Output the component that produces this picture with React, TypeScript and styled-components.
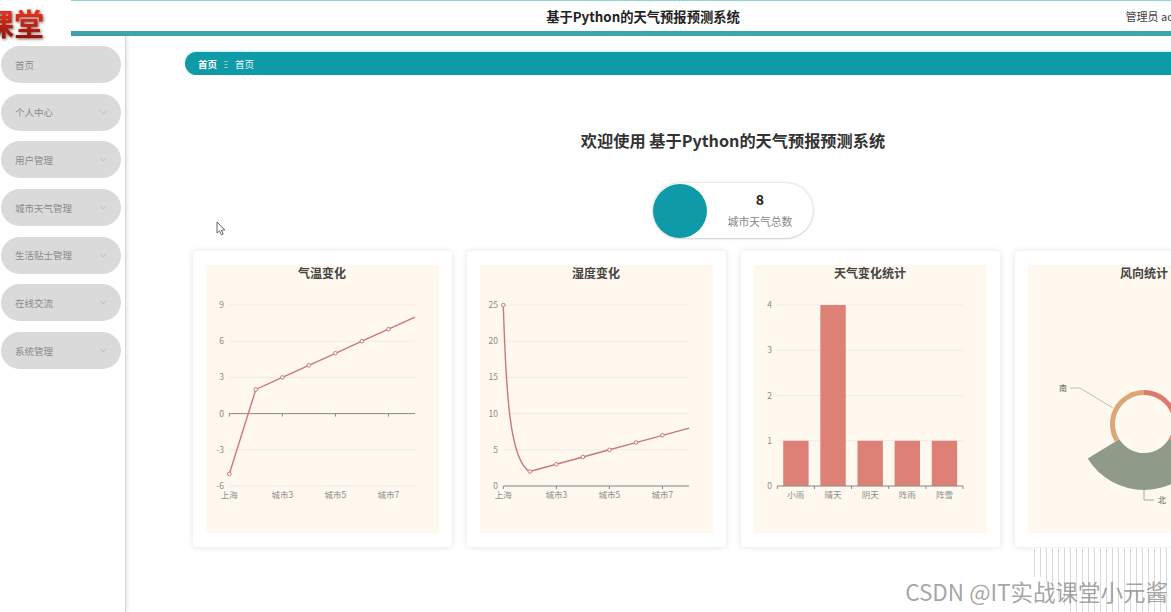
import React from 'react'
import styled, { createGlobalStyle } from 'styled-components'
import { ChevronDown } from 'lucide-react'

const FONT = '"Noto Sans CJK SC", "Liberation Sans", sans-serif'
const TEAL = '#0f9aa8'

const GlobalStyle = createGlobalStyle`
  html, body {
    margin: 0;
    height: 100%;
    overflow: hidden;
    background: #fff;
    font-family: ${FONT};
  }
`

const menus = [
  { label: '首页', arrow: false },
  { label: '个人中心', arrow: true },
  { label: '用户管理', arrow: true },
  { label: '城市天气管理', arrow: true },
  { label: '生活贴士管理', arrow: true },
  { label: '在线交流', arrow: true },
  { label: '系统管理', arrow: true },
]

const GRID_LEFT = 23.3
const GRID_RIGHT = 209
const GRID_TOP = 40
const GRID_BOTTOM = 221

type LineChartProps = {
  ticks: number[]
  values: number[]
  smoothHead?: boolean
}

const LineChart = ({ ticks, values, smoothHead }: LineChartProps) => {
  const min = ticks[0]
  const max = ticks[ticks.length - 1]
  const step = (GRID_RIGHT - GRID_LEFT) / (values.length - 1)
  const toX = (i: number) => GRID_LEFT + i * step
  const toY = (v: number) => GRID_BOTTOM - ((v - min) / (max - min)) * (GRID_BOTTOM - GRID_TOP)
  const zeroY = toY(0)

  const points = values.map((v, i) => `${toX(i)} ${toY(v)}`)
  const line = smoothHead
    ? `M${points[0]} C26 130 30 196 ${points[1]} L${points.slice(2).join(' L')}`
    : `M${points.join(' L')}`

  return (
    <ChartSvg viewBox="0 16 232 252">
      {ticks.map((t) => (
        <g key={t}>
          <line x1={GRID_LEFT} x2={GRID_RIGHT} y1={toY(t)} y2={toY(t)} stroke="#eeeae6" />
          <AxisText x={18} y={toY(t) + 3} textAnchor="end">
            {t}
          </AxisText>
        </g>
      ))}
      <line x1={GRID_LEFT} x2={GRID_RIGHT} y1={zeroY} y2={zeroY} stroke="#8a8a86" />
      {[0, 2, 4, 6].map((i) => (
        <line key={i} x1={toX(i)} x2={toX(i)} y1={zeroY} y2={zeroY + 3} stroke="#8a8a86" />
      ))}
      {['上海', '城市3', '城市5', '城市7'].map((label, i) => (
        <AxisText key={label} x={toX(i * 2)} y={233} textAnchor="middle">
          {label}
        </AxisText>
      ))}
      <path d={line} fill="none" stroke="#c9777b" strokeWidth={1.4} />
      {values.slice(0, -1).map((v, i) => (
        <circle key={i} cx={toX(i)} cy={toY(v)} r={1.8} fill="#fef8ef" stroke="#c9777b" />
      ))}
    </ChartSvg>
  )
}

const BarChart = () => {
  const bars = [
    { label: '小雨', value: 1 },
    { label: '晴天', value: 4 },
    { label: '阴天', value: 1 },
    { label: '阵雨', value: 1 },
    { label: '阵雪', value: 1 },
  ]
  const slot = (GRID_RIGHT - GRID_LEFT) / bars.length
  const unit = (GRID_BOTTOM - GRID_TOP) / 4

  return (
    <ChartSvg viewBox="0 16 232 252">
      {[0, 1, 2, 3, 4].map((t) => (
        <g key={t}>
          <line x1={GRID_LEFT} x2={GRID_RIGHT} y1={GRID_BOTTOM - t * unit} y2={GRID_BOTTOM - t * unit} stroke="#eeeae6" />
          <AxisText x={18} y={GRID_BOTTOM - t * unit + 3} textAnchor="end">
            {t}
          </AxisText>
        </g>
      ))}
      {bars.map((bar, i) => (
        <g key={bar.label}>
          <rect
            x={GRID_LEFT + i * slot + 5.9}
            y={GRID_BOTTOM - bar.value * unit}
            width={25.4}
            height={bar.value * unit}
            fill="#dd8177"
          />
          <AxisText x={GRID_LEFT + i * slot + slot / 2} y={233} textAnchor="middle">
            {bar.label}
          </AxisText>
        </g>
      ))}
      <line x1={GRID_LEFT} x2={GRID_RIGHT} y1={GRID_BOTTOM} y2={GRID_BOTTOM} stroke="#8a8a86" />
      {[0, 1, 2, 3, 4, 5].map((i) => (
        <line key={i} x1={GRID_LEFT + i * slot} x2={GRID_LEFT + i * slot} y1={GRID_BOTTOM} y2={GRID_BOTTOM + 3} stroke="#8a8a86" />
      ))}
    </ChartSvg>
  )
}

// sector path, angles are clockwise from 12 o'clock
const sector = (cx: number, cy: number, r0: number, r1: number, from: number, to: number) => {
  const pt = (r: number, deg: number) => {
    const a = (deg * Math.PI) / 180
    return `${cx + r * Math.sin(a)} ${cy - r * Math.cos(a)}`
  }
  const large = to - from > 180 ? 1 : 0
  return `M${pt(r1, from)} A${r1} ${r1} 0 ${large} 1 ${pt(r1, to)} L${pt(r0, to)} A${r0} ${r0} 0 ${large} 0 ${pt(r0, from)} Z`
}

const RoseChart = () => (
  <ChartSvg viewBox="0 16 232 252">
    <path d={sector(116, 159, 29, 34, 0, 120)} fill="#dd7a70" />
    <path d={sector(116, 159, 29, 66, 120, 238.5)} fill="#8f9a89" />
    <path d={sector(116, 159, 29, 34, 238.5, 360)} fill="#dba778" />
    <polyline points="42,123 52,123 85,143" fill="none" stroke="#cdbba6" />
    <polyline points="116,225 116,235 126,235" fill="none" stroke="#a5a89e" />
    <RoseLabel x={35} y={126} textAnchor="middle">
      南
    </RoseLabel>
    <RoseLabel x={134} y={238} textAnchor="middle">
      北
    </RoseLabel>
  </ChartSvg>
)

const App = () => (
  <Page>
    <GlobalStyle />
    <Header>
      <HeaderTitle>基于Python的天气预报预测系统</HeaderTitle>
      <HeaderUser>管理员 admin</HeaderUser>
    </Header>
    <Logo>
      <LogoText>课堂</LogoText>
    </Logo>
    <Body>
      <Sidebar>
        {menus.map((menu) => (
          <MenuItem key={menu.label}>
            {menu.label}
            {menu.arrow && <ChevronDown size={11} strokeWidth={1.4} color="#aaa" />}
          </MenuItem>
        ))}
      </Sidebar>
      <Main>
        <Breadcrumb>
          <CrumbStrong>首页</CrumbStrong>
          <CrumbSeparator>三</CrumbSeparator>
          <span>首页</span>
        </Breadcrumb>
        <Welcome>欢迎使用 基于Python的天气预报预测系统</Welcome>
        <StatCard>
          <StatCircle />
          <StatBody>
            <StatValue>8</StatValue>
            <StatLabel>城市天气总数</StatLabel>
          </StatBody>
        </StatCard>
        <Cards>
          <Card>
            <ChartPanel>
              <ChartTitle>气温变化</ChartTitle>
              <LineChart ticks={[-6, -3, 0, 3, 6, 9]} values={[-5, 2, 3, 4, 5, 6, 7, 8]} />
            </ChartPanel>
          </Card>
          <Card>
            <ChartPanel>
              <ChartTitle>湿度变化</ChartTitle>
              <LineChart ticks={[0, 5, 10, 15, 20, 25]} values={[25, 2, 3, 4, 5, 6, 7, 8]} smoothHead />
            </ChartPanel>
          </Card>
          <Card>
            <ChartPanel>
              <ChartTitle>天气变化统计</ChartTitle>
              <BarChart />
            </ChartPanel>
          </Card>
          <Card>
            <ChartPanel>
              <ChartTitle>风向统计</ChartTitle>
              <RoseChart />
            </ChartPanel>
          </Card>
        </Cards>
      </Main>
    </Body>
    <Cursor width="12" height="16" viewBox="0 0 12 16">
      <path d="M1 1 L1 12 L3.6 9.8 L5.4 13.8 L7.2 13 L5.4 9.2 L8.8 9 Z" fill="#fff" stroke="#555" strokeWidth={0.9} />
    </Cursor>
    <Stripes />
    <Watermark>CSDN @IT实战课堂小元酱</Watermark>
  </Page>
)

const Page = styled.div`
  position: relative;
  width: 100vw;
  height: 100vh;
  overflow: hidden;
  display: flex;
  flex-direction: column;
`

const Header = styled.header`
  flex-shrink: 0;
  box-sizing: border-box;
  width: 1144px;
  height: 36px;
  margin-left: 71px;
  display: grid;
  grid-template-columns: 1fr auto 1fr;
  align-items: center;
  border-top: 1px solid #8fd3d6;
  border-bottom: 5px solid #3ba7ad;
`

const HeaderTitle = styled.div`
  grid-column: 2;
  font-size: 13.3px;
  font-weight: 700;
  color: #222;
`

const HeaderUser = styled.div`
  grid-column: 3;
  justify-self: end;
  padding-right: 21px;
  font-size: 11px;
  color: #444;
`

const Logo = styled.div`
  position: absolute;
  left: 0;
  top: 0;
  z-index: 2;
  box-sizing: border-box;
  width: 71px;
  height: 45px;
  padding-right: 27px;
  display: flex;
  justify-content: flex-end;
  overflow: hidden;
  background: #fff;
`

const LogoText = styled.div`
  flex-shrink: 0;
  font-size: 30px;
  line-height: 45px;
  font-weight: 700;
  color: #b81c0e;
  background: linear-gradient(180deg, #e2301a 30%, #8e130a 85%);
  -webkit-background-clip: text;
  background-clip: text;
  -webkit-text-fill-color: transparent;
  filter: drop-shadow(1px 1px 1.5px rgba(70, 10, 5, 0.7));
`

const Body = styled.div`
  flex: 1;
  min-height: 0;
  display: flex;
`

const Sidebar = styled.aside`
  flex-shrink: 0;
  box-sizing: border-box;
  width: 126px;
  padding: 10px 4px 0 1px;
  display: flex;
  flex-direction: column;
  gap: 10.7px;
  border-right: 1px solid #d6d6d6;
  box-shadow: 1px 0 4px rgba(0, 0, 0, 0.12);
`

const MenuItem = styled.div`
  box-sizing: border-box;
  height: 37px;
  padding: 0 12px 0 14px;
  display: flex;
  align-items: center;
  justify-content: space-between;
  border-radius: 19px;
  background: #dadada;
  font-size: 9.5px;
  color: #8a8a8a;
`

const Main = styled.main`
  flex-shrink: 0;
  width: 1096px;
  margin-left: 59px;
  padding-top: 16px;
  display: flex;
  flex-direction: column;
  align-items: center;
`

const Breadcrumb = styled.nav`
  align-self: stretch;
  box-sizing: border-box;
  height: 23px;
  padding-left: 13px;
  display: flex;
  align-items: center;
  gap: 5px;
  border-radius: 12px 0 0 12px;
  background: ${TEAL};
  box-shadow: 0 -1px 2px rgba(120, 225, 235, 0.5);
  font-size: 9.5px;
  color: #eaf8f9;
`

const CrumbStrong = styled.span`
  font-weight: 700;
  color: #fff;
`

const CrumbSeparator = styled.span`
  font-size: 8px;
  transform: scaleX(0.55);
`

const Welcome = styled.h1`
  margin: 53px 0 0;
  font-size: 16.2px;
  line-height: 24px;
  font-weight: 700;
  color: #333;
`

const StatCard = styled.div`
  box-sizing: border-box;
  width: 160px;
  height: 55px;
  margin-top: 31px;
  display: flex;
  align-items: center;
  border-radius: 28px;
  background: #fff;
  box-shadow: 0 0 3px rgba(0, 0, 0, 0.22), 0 1px 2px rgba(0, 0, 0, 0.1);
`

const StatCircle = styled.div`
  flex-shrink: 0;
  width: 54px;
  height: 54px;
  border-radius: 50%;
  background: ${TEAL};
`

const StatBody = styled.div`
  flex: 1;
  display: flex;
  flex-direction: column;
  align-items: center;
`

const StatValue = styled.div`
  margin-top: -3px;
  font-size: 14px;
  line-height: 20px;
  font-weight: 700;
  color: #222;
`

const StatLabel = styled.div`
  margin-top: 4px;
  font-size: 10.8px;
  line-height: 16px;
  color: #888;
`

const Cards = styled.section`
  align-self: flex-start;
  margin: 13px 0 0 7.5px;
  display: flex;
  gap: 15px;
`

const Card = styled.article`
  flex-shrink: 0;
  box-sizing: border-box;
  width: 259px;
  height: 296px;
  padding: 14px 13px;
  border-radius: 3px;
  background: #fff;
  box-shadow: 0 0 6px rgba(0, 0, 0, 0.12);
`

const ChartPanel = styled.div`
  height: 268px;
  display: flex;
  flex-direction: column;
  background: #fef8ef;
`

const ChartTitle = styled.div`
  height: 16px;
  text-align: center;
  font-size: 12px;
  line-height: 16px;
  font-weight: 700;
  color: #444;
`

const ChartSvg = styled.svg`
  display: block;
  width: 232px;
  height: 252px;
`

const AxisText = styled.text`
  font-family: ${FONT};
  font-size: 8.5px;
  fill: #8c8c8c;
`

const RoseLabel = styled.text`
  font-family: ${FONT};
  font-size: 8px;
  fill: #555;
`

const Cursor = styled.svg`
  position: absolute;
  left: 216px;
  top: 221px;
`

const Stripes = styled.div`
  position: absolute;
  left: 1034px;
  top: 548px;
  right: 0;
  bottom: 0;
  background: repeating-linear-gradient(90deg, #d9d9d9 0 1px, #fff 1px 6px);
  clip-path: polygon(0 0, 100% 0, 100% 100%, 26% 100%, 6% 45%, 0 45%);
`

const Watermark = styled.div`
  position: absolute;
  right: 3px;
  bottom: 7px;
  font-size: 22.5px;
  line-height: 28px;
  white-space: nowrap;
  color: rgba(125, 125, 125, 0.7);
`

export default App
